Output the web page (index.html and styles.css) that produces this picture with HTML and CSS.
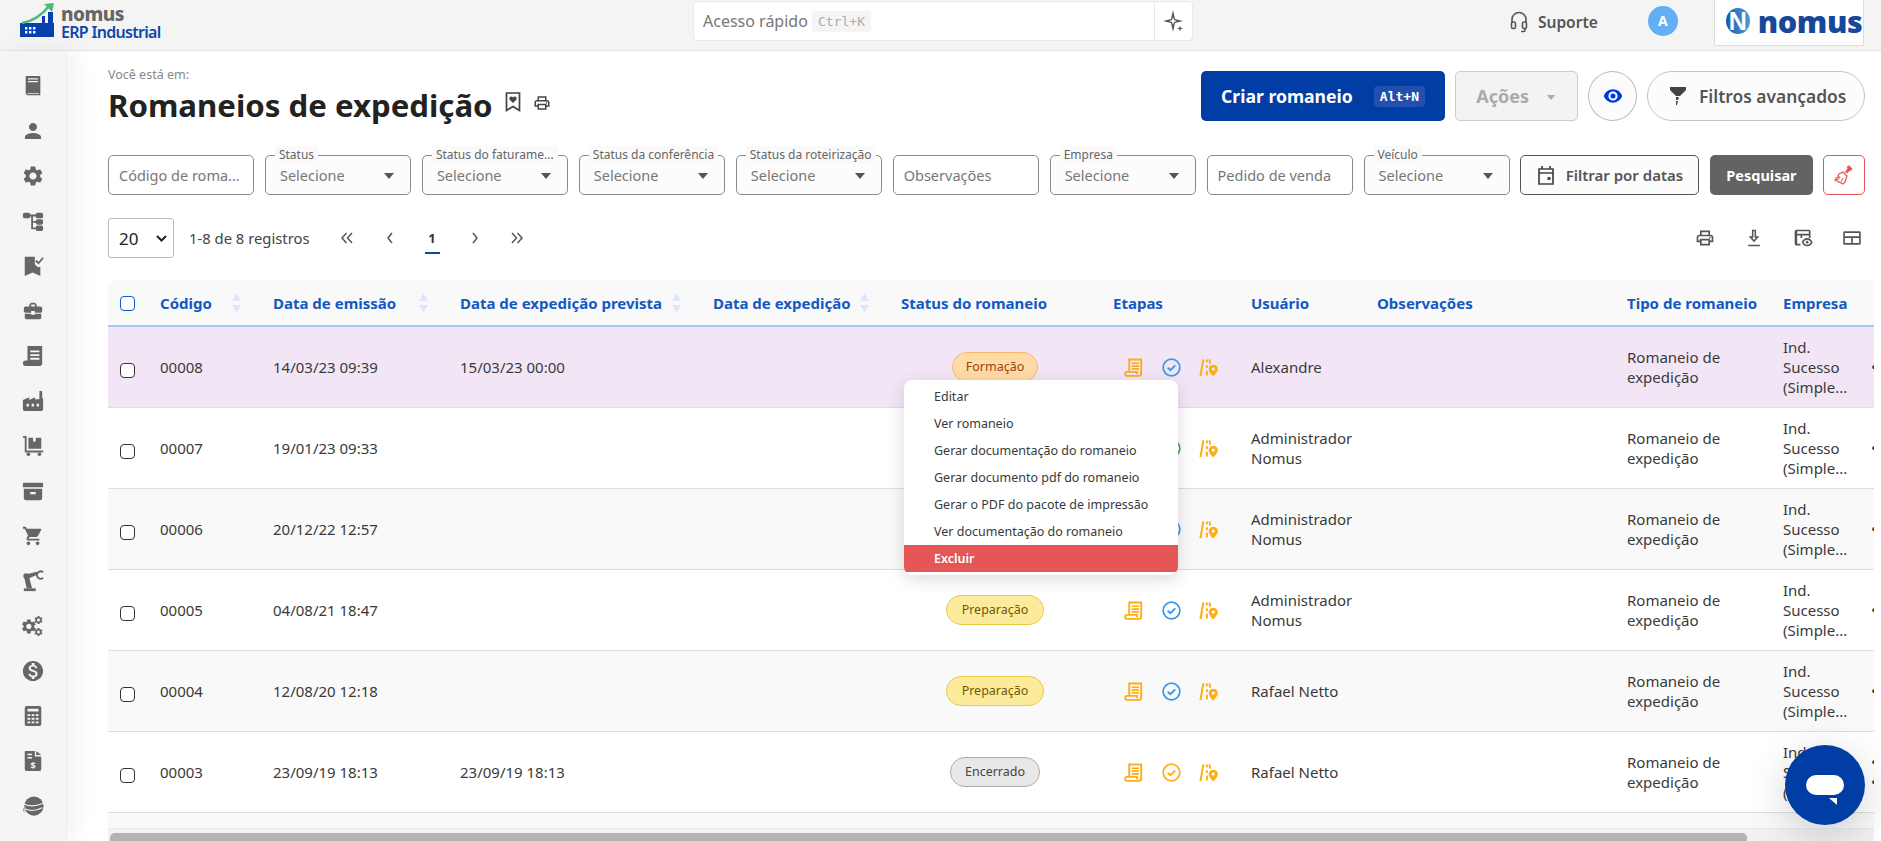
FILE: index.html
```html
<!DOCTYPE html>
<html lang="pt-BR">
<head>
    <meta charset="UTF-8">
    <title>Romaneios de expedição</title>
    <link rel="stylesheet" href="styles.css">
</head>
<body>
    <svg class="sprite" xmlns="http://www.w3.org/2000/svg">
        <symbol id="i-print" viewBox="0 0 24 24"><path d="M19 8h-1V3H6v5H5c-1.66 0-3 1.34-3 3v6h4v4h12v-4h4v-6c0-1.66-1.34-3-3-3zM8 5h8v3H8V5zm8 12v2H8v-4h8v2zm2-2v-2H6v2H4v-4c0-.55.45-1 1-1h14c.55 0 1 .45 1 1v4h-2z"/><circle cx="18" cy="11.5" r="1"/></symbol>
        <symbol id="i-gear" viewBox="0 0 24 24"><path d="M19.14 12.94c.04-.3.06-.61.06-.94 0-.32-.02-.64-.07-.94l2.03-1.58c.18-.14.23-.41.12-.61l-1.92-3.32c-.12-.22-.37-.29-.59-.22l-2.39.96c-.5-.38-1.03-.7-1.62-.94l-.36-2.54c-.04-.24-.24-.41-.48-.41h-3.84c-.24 0-.43.17-.47.41l-.36 2.54c-.59.24-1.13.57-1.62.94l-2.39-.96c-.22-.08-.47 0-.59.22L2.74 8.87c-.12.21-.08.47.12.61l2.03 1.58c-.05.3-.09.63-.09.94s.02.64.07.94l-2.03 1.58c-.18.14-.23.41-.12.61l1.92 3.32c.12.22.37.29.59.22l2.39-.96c.5.38 1.03.7 1.62.94l.36 2.54c.05.24.24.41.48.41h3.84c.24 0 .44-.17.47-.41l.36-2.54c.59-.24 1.13-.56 1.62-.94l2.39.96c.22.08.47 0 .59-.22l1.92-3.32c.12-.22.07-.47-.12-.61l-2.01-1.58zM12 15.6c-1.98 0-3.6-1.62-3.6-3.6s1.62-3.6 3.6-3.6 3.6 1.62 3.6 3.6-1.62 3.6-3.6 3.6z"/></symbol>
        <symbol id="i-receipt" viewBox="0 0 20 20"><path fill="none" stroke="currentColor" stroke-width="2" d="M5.5 14.5V1.600h12.600v15a2.200 2.200 0 0 1-2.200 2.200H3a1.800 1.800 0 0 1-1.800-1.900v-.4a1.800 1.800 0 0 1 1.800-1.900h10.600v2.400"/><path stroke="currentColor" stroke-width="1.700" d="M8 5.500h7.800M8 8.500h7.800M8 11.500h7.800"/></symbol>
        <symbol id="i-check" viewBox="0 0 20 20"><circle cx="10" cy="10" r="8.800" fill="none" stroke="currentColor" stroke-width="1.800"/><path fill="none" stroke="currentColor" stroke-width="2.100" d="M6 10.200l2.900 2.600 5.100-5"/></symbol>
        <symbol id="i-road" viewBox="0 0 20 20"><path fill="none" stroke="currentColor" stroke-width="2.100" d="M1.500 19L4.600 1.500M8.300 1.500v3M8.300 7.500v3M8.300 13.500v5M11 1.500l.8 4.500"/><path fill-rule="evenodd" d="M15 7a4.800 4.800 0 0 0-4.800 4.800c0 3.200 4.800 7.600 4.800 7.600s4.800-4.400 4.800-7.600A4.800 4.800 0 0 0 15 7zm0 6.400a1.700 1.700 0 1 1 0-3.400 1.700 1.700 0 0 1 0 3.400z"/></symbol>
        <symbol id="i-sort" viewBox="0 0 9 20"><path d="M4.500 0L9 8H0zM4.500 20L0 12h9z"/></symbol>
    </svg>

    <header class="topbar">
        <div class="brand">
            <svg class="brand-mark" viewBox="0 0 34 34">
                <path fill="#0a3fae" d="M0 20h34v14H0z"/>
                <path fill="#0a3fae" d="M28 9h5v11h-5zM22 13h3v7h-3z"/>
                <path fill="none" stroke="#4dbb7c" stroke-width="2.600" d="M2 20C14 18 22 12 29 3"/>
                <path fill="#4dbb7c" d="M24 1l10-1-2 9z"/>
                <path fill="#fff" d="M5 24h2.400v2.400H5zM9 24h2.400v2.400H9zM13 24h2.400v2.400H13zM5 28h2.400v2.400H5zM9 28h2.400v2.400H9zM13 28h2.400v2.400H13z"/>
            </svg>
            <div class="brand-text">
                <span class="brand-name">nomus</span>
                <span class="brand-product">ERP Industrial</span>
            </div>
        </div>
        <div class="quick-access">
            <div class="quick-input">Acesso rápido <kbd class="quick-key">Ctrl+K</kbd></div>
            <button class="quick-ai">
                <svg width="20" height="24" viewBox="0 0 20 24"><path fill="#555" d="M9 1l2 9 8 2-8 2-2 9-2-9-8-2 8-2z"/><path fill="#fff" d="M9 8l1 3 3 1-3 1-1 3-1-3-3-1 3-1z"/><path fill="#555" d="M16 16.500l.7 2.300 2.300.7-2.300.7-.7 2.300-.7-2.300-2.300-.7 2.300-.7z"/></svg>
            </button>
        </div>
        <div class="support">
            <svg width="18" height="22" viewBox="0 0 18 22" fill="none" stroke="#555" stroke-width="1.600"><path d="M2 12V8.500a7 7 0 0 1 14 0V12"/><rect x="1.500" y="11" width="4" height="6.500" rx="1.500"/><rect x="12.500" y="11" width="4" height="6.500" rx="1.500"/><path d="M15 17.500v1.500a1.500 1.500 0 0 1-1.500 1.500H11"/></svg>
            <span>Suporte</span>
        </div>
        <div class="avatar">A</div>
        <div class="company-logo">
            <span class="company-mark">N</span>
            <span class="company-name">nomus</span>
        </div>
    </header>

    <div class="layout">
        <nav class="sidebar">
            <a class="nav-item"><svg viewBox="0 0 24 24"><path fill-rule="evenodd" d="M5 1h14a1 1 0 0 1 1 1v20H6a2 2 0 0 1-2-2V2a1 1 0 0 1 1-1zm1.500 2.500V5h11V3.500zm0 3V8h11V6.500zM6 19.500v1h12.500v-1z"/></svg></a>
            <a class="nav-item"><svg viewBox="0 0 24 24"><path d="M12 12c2.210 0 4-1.790 4-4s-1.790-4-4-4-4 1.790-4 4 1.790 4 4 4zm0 2c-2.670 0-8 1.340-8 4v2h16v-2c0-2.660-5.330-4-8-4z" transform="translate(-1.200 -1.200) scale(1.100)"/></svg></a>
            <a class="nav-item"><svg viewBox="0 0 24 24"><use href="#i-gear" x="-1" y="-1" width="26" height="26"/></svg></a>
            <a class="nav-item"><svg viewBox="0 0 24 24"><rect x="1" y="3" width="8" height="6" rx="2"/><rect x="15" y="3" width="8" height="6" rx="2"/><rect x="15" y="10" width="8" height="6" rx="2"/><rect x="15" y="17" width="8" height="6" rx="2"/><path fill="none" stroke="currentColor" stroke-width="2" d="M8 6h8M11 6v14h5M11 13h5"/></svg></a>
            <a class="nav-item"><svg viewBox="0 0 24 24"><path d="M3 2h11v8l3 3h3v10l-8.500-4L3 23z"/><path fill="none" stroke="currentColor" stroke-width="2" d="M15 6l3 3 5-6"/></svg></a>
            <a class="nav-item"><svg viewBox="0 0 24 24"><path d="M10 16v-1H3.010L3 19c0 1.110.89 2 2 2h14c1.110 0 2-.89 2-2v-4h-7v1h-4zm10-9h-4.010V5l-2-2h-4l-2 2v2H4c-1.100 0-2 .9-2 2v3c0 1.110.89 2 2 2h6v-2h4v2h6c1.100 0 2-.9 2-2V9c0-1.100-.9-2-2-2zm-6 0h-4V5h4v2z"/></svg></a>
            <a class="nav-item"><svg viewBox="0 0 24 24"><path fill-rule="evenodd" d="M6 1h16v19a3 3 0 0 1-3 3H4a3 3 0 0 1-3-3 3 3 0 0 1 3-3h2zm3 5v2h10V6zm0 4v2h10v-2zm0 4v2h10v-2z"/></svg></a>
            <a class="nav-item"><svg viewBox="0 0 24 24"><path fill-rule="evenodd" d="M19 1h3v8h1v12a2 2 0 0 1-2 2H3a2 2 0 0 1-2-2V11l7-3v3l6-3v2h5zM5 15v3h2.500v-3zm5.500 0v3H13v-3zm5.500 0v3h2.500v-3z"/></svg></a>
            <a class="nav-item"><svg viewBox="0 0 24 24"><path d="M7 3h5v4h3V3h6v12H7z"/><path fill="none" stroke="currentColor" stroke-width="2" d="M1 2h3v16h19"/><circle cx="7" cy="21" r="2"/><circle cx="19" cy="21" r="2"/></svg></a>
            <a class="nav-item"><svg viewBox="0 0 24 24"><path fill-rule="evenodd" d="M2 3h20a1 1 0 0 1 1 1v4H1V4a1 1 0 0 1 1-1zm0 6.500h20V20a2 2 0 0 1-2 2H4a2 2 0 0 1-2-2zM9 13v2.500h6V13z"/></svg></a>
            <a class="nav-item"><svg viewBox="0 0 24 24"><path d="M7 18c-1.100 0-1.990.9-1.990 2S5.900 22 7 22s2-.9 2-2-.9-2-2-2zM1 2v2h2l3.600 7.590-1.350 2.450c-.16.28-.25.61-.25.96 0 1.100.9 2 2 2h12v-2H7.420c-.14 0-.25-.11-.25-.25l.03-.12.9-1.630h7.450c.75 0 1.410-.41 1.750-1.030l3.580-6.490c.08-.14.12-.31.12-.48 0-.55-.45-1-1-1H5.210l-.94-2H1zm16 16c-1.100 0-1.990.9-1.990 2s.89 2 1.990 2 2-.9 2-2-.9-2-2-2z"/></svg></a>
            <a class="nav-item"><svg viewBox="0 0 24 24"><path d="M2 20h13v3H2z"/><path d="M5 20L2.500 8 4 5l12-3 1 3L8 9l3 11z"/><circle cx="4.500" cy="6.500" r="3"/><path fill="none" stroke="currentColor" stroke-width="2" d="M23 2.500a4 4 0 1 0 0 6"/></svg></a>
            <a class="nav-item"><svg viewBox="0 0 24 24"><use href="#i-gear" x="-2" y="3" width="19" height="19"/><use href="#i-gear" x="12.500" y="0" width="11" height="11"/><use href="#i-gear" x="12.500" y="13" width="11" height="11"/></svg></a>
            <a class="nav-item"><svg viewBox="0 0 24 24"><path d="M12 2C6.480 2 2 6.480 2 12s4.480 10 10 10 10-4.480 10-10S17.520 2 12 2zm1.410 16.090V20h-2.670v-1.930c-1.710-.36-3.160-1.460-3.270-3.400h1.960c.1 1.050.82 1.870 2.650 1.870 1.960 0 2.400-.98 2.400-1.590 0-.83-.44-1.610-2.670-2.140-2.480-.6-4.180-1.620-4.180-3.670 0-1.720 1.390-2.840 3.110-3.210V4h2.670v1.950c1.860.45 2.790 1.860 2.870 3.390H14.300c-.05-1.110-.64-1.870-2.220-1.870-1.500 0-2.400.68-2.400 1.640 0 .84.65 1.390 2.670 1.910s4.180 1.390 4.180 3.910c-.01 1.830-1.380 2.830-3.120 3.160z" transform="translate(-1.200 -1.200) scale(1.100)"/></svg></a>
            <a class="nav-item"><svg viewBox="0 0 24 24"><path fill-rule="evenodd" d="M5 1h14a2 2 0 0 1 2 2v18a2 2 0 0 1-2 2H5a2 2 0 0 1-2-2V3a2 2 0 0 1 2-2zm1 3v3h12V4zm0 6v2h3v-2zm4.500 0v2h3v-2zm4.500 0v2h3v-2zM6 14v2h3v-2zm4.500 0v2h3v-2zm4.500 0v2h3v-2zM6 18v2h3v-2zm4.500 0v2h3v-2zm4.500 0v2h3v-2z"/></svg></a>
            <a class="nav-item"><svg viewBox="0 0 24 24"><path d="M4 1h10v6h7v14a2 2 0 0 1-2 2H5a2 2 0 0 1-2-2V2a1 1 0 0 1 1-1zM15.500 1L21 5.500h-5.500z"/><path fill="none" stroke="#f5f5f5" stroke-width="1.600" d="M6 5h5M6 8.500h5"/><text class="nav-dollar" x="12" y="20.500">$</text></svg></a>
            <a class="nav-item"><svg viewBox="0 0 24 24"><circle cx="13" cy="12" r="10.500"/><path fill="none" stroke="#f5f5f5" stroke-width="1.300" d="M3 10c6 3 13 2 20-1M3 15c6 3 13 2 19-1"/><path fill="none" stroke="#aaa" stroke-width="1.600" d="M4 13c-3 2-3 4-1 5"/></svg></a>
        </nav>

        <main class="main">
            <div class="page-head">
                <div class="page-title">
                    <div class="crumb">Você está em:</div>
                    <h1>Romaneios de expedição
                        <svg class="title-bookmark" viewBox="0 0 16 20"><path fill="none" stroke="#444" stroke-width="1.700" d="M1.500 1h13v17.500L8 14.500l-6.500 4z"/><path fill="#444" d="M8 11L4.500 7.500a2 2 0 0 1 3.500-2 2 2 0 0 1 3.500 2z"/></svg>
                        <svg class="title-print"><use href="#i-print"/></svg>
                    </h1>
                </div>
                <div class="page-actions">
                    <button class="btn-create">Criar romaneio <kbd class="create-key">Alt+N</kbd></button>
                    <button class="btn-actions">Ações <span class="caret-small"></span></button>
                    <button class="btn-eye">
                        <svg width="20" height="20" viewBox="0 0 24 24"><path fill="#0038e0" fill-rule="evenodd" d="M12 4C7 4 2.700 7.300 1 12c1.700 4.700 6 8 11 8s9.300-3.300 11-8c-1.700-4.700-6-8-11-8zm0 13.500a5.500 5.500 0 1 1 0-11 5.500 5.500 0 0 1 0 11zm0-2.500a3 3 0 1 0 0-6 3 3 0 0 0 0 6z"/></svg>
                    </button>
                    <button class="btn-advanced">
                        <svg width="18" height="20" viewBox="0 0 18 20"><path fill="#444" d="M1 1h16v3l-6 6h-4L1 4zM7 11h3l-1 3H7zM7 15h2l-1 4H7z"/></svg>
                        Filtros avançados
                    </button>
                </div>
            </div>

            <div class="filters">
                <div class="field">Código de roma...</div>
                <div class="field field-select"><span class="field-label">Status</span>Selecione</div>
                <div class="field field-select"><span class="field-label">Status do faturame...</span>Selecione</div>
                <div class="field field-select"><span class="field-label">Status da conferência</span>Selecione</div>
                <div class="field field-select"><span class="field-label">Status da roteirização</span>Selecione</div>
                <div class="field">Observações</div>
                <div class="field field-select"><span class="field-label">Empresa</span>Selecione</div>
                <div class="field">Pedido de venda</div>
                <div class="field field-select"><span class="field-label">Veículo</span>Selecione</div>
                <button class="btn-dates">
                    <svg width="18" height="20" viewBox="0 0 18 20"><path fill="none" stroke="#444" stroke-width="1.700" d="M2 4h14v15H2zM2 8h14M5 1v3M13 1v3"/><rect x="10.500" y="12" width="3" height="3" fill="#444"/></svg>
                    Filtrar por datas
                </button>
                <button class="btn-search">Pesquisar</button>
                <button class="btn-clear">
                    <svg width="20" height="20" viewBox="0 0 20 20"><path fill="#e55757" d="M13 1.500l2-1.200 3.500 3.500-1.500 2-1.500.2-2.500 2.500-2-2 2.300-2.500z"/><path fill="none" stroke="#e55757" stroke-width="1.300" d="M9 7l4 4-2 6-2 2-8-4 2-1-1-1 3-1-1-1 1-2z"/><path stroke="#e55757" d="M4 15l2-3M7 17l2-4"/></svg>
                </button>
            </div>

            <div class="pager-row">
                <div class="page-size">20<svg width="11" height="7" viewBox="0 0 11 7"><path fill="none" stroke="#222" stroke-width="2" d="M1 1l4.500 4.500L10 1"/></svg></div>
                <span class="record-count">1-8 de 8 registros</span>
                <div class="pager">
                    <svg viewBox="0 0 14 12"><path d="M6.500 1L2 6l4.500 5M12 1L7.500 6l4.500 5"/></svg>
                    <svg viewBox="0 0 14 12"><path d="M9 1L5 6l4 5"/></svg>
                    <span class="page-current">1</span>
                    <svg viewBox="0 0 14 12"><path d="M5 1l4 5-4 5"/></svg>
                    <svg viewBox="0 0 14 12"><path d="M2 1l4.500 5L2 11M7.500 1L12 6l-4.500 5"/></svg>
                </div>
                <div class="table-tools">
                    <svg viewBox="0 0 24 24"><use href="#i-print"/></svg>
                    <svg viewBox="0 0 24 24"><path d="M9.500 2h5v8h4L12 17l-6.500-7h4zm1.800 1.800v8H9.700l2.300 2.500 2.300-2.500h-1.600v-8zM5 20h14v2H5z"/></svg>
                    <svg viewBox="0 0 24 24"><path d="M4 2h15a2 2 0 0 1 2 2v8h-2V9H11v3H9V9H5v10h4v2H4a2 2 0 0 1-2-2V4a2 2 0 0 1 2-2zm1 2v3h14V4z"/><path fill-rule="evenodd" d="M17 12c-3 0-5.500 2-6.500 5 1 3 3.500 5 6.500 5s5.500-2 6.500-5c-1-3-3.500-5-6.500-5zm0 8c-2 0-3.600-1.200-4.400-3 .8-1.800 2.400-3 4.400-3s3.600 1.200 4.400 3c-.8 1.800-2.400 3-4.400 3z"/><circle cx="17" cy="17" r="1.600"/></svg>
                    <svg viewBox="0 0 24 24"><path d="M3 4h18a1.500 1.500 0 0 1 1.500 1.500v13A1.500 1.500 0 0 1 21 20H3a1.500 1.500 0 0 1-1.500-1.500v-13A1.500 1.500 0 0 1 3 4zm.500 2v4h17V6zm0 6v6h7.500v-6zm9.500 0v6h7.500v-6z"/></svg>
                </div>
            </div>

            <div class="table-wrap">
                <table class="grid">
                    <colgroup>
                        <col class="c-check"><col class="c-code"><col class="c-issued"><col class="c-planned"><col class="c-shipped"><col class="c-status"><col class="c-steps"><col class="c-user"><col class="c-notes"><col class="c-type"><col class="c-company"><col class="c-more">
                    </colgroup>
                    <thead>
                        <tr>
                            <th><input type="checkbox" class="check check-head"></th>
                            <th><div class="th-sort">Código<svg class="sort"><use href="#i-sort"/></svg></div></th>
                            <th><div class="th-sort">Data de emissão<svg class="sort"><use href="#i-sort"/></svg></div></th>
                            <th><div class="th-sort">Data de expedição prevista<svg class="sort"><use href="#i-sort"/></svg></div></th>
                            <th><div class="th-sort">Data de expedição<svg class="sort"><use href="#i-sort"/></svg></div></th>
                            <th>Status do romaneio</th>
                            <th>Etapas</th>
                            <th>Usuário</th>
                            <th>Observações</th>
                            <th>Tipo de romaneio</th>
                            <th>Empresa</th>
                            <th></th>
                        </tr>
                    </thead>
                    <tbody>
                        <tr class="row-selected">
                            <td><input type="checkbox" class="check"></td>
                            <td>00008</td><td>14/03/23 09:39</td><td>15/03/23 00:00</td><td></td>
                            <td class="cell-status"><span class="badge badge-forming">Formação</span></td>
                            <td><div class="steps"><svg class="step-amber"><use href="#i-receipt"/></svg><svg class="step-blue"><use href="#i-check"/></svg><svg class="step-amber"><use href="#i-road"/></svg></div></td>
                            <td>Alexandre</td><td></td><td>Romaneio de expedição</td><td>Ind. Sucesso (Simple...</td><td>•</td>
                        </tr>
                        <tr>
                            <td><input type="checkbox" class="check"></td>
                            <td>00007</td><td>19/01/23 09:33</td><td></td><td></td>
                            <td class="cell-status"><span class="badge badge-prep">Preparação</span></td>
                            <td><div class="steps"><svg class="step-amber"><use href="#i-receipt"/></svg><svg class="step-green"><use href="#i-check"/></svg><svg class="step-amber"><use href="#i-road"/></svg></div></td>
                            <td>Administrador Nomus</td><td></td><td>Romaneio de expedição</td><td>Ind. Sucesso (Simple...</td><td>•</td>
                        </tr>
                        <tr>
                            <td><input type="checkbox" class="check"></td>
                            <td>00006</td><td>20/12/22 12:57</td><td></td><td></td>
                            <td class="cell-status"><span class="badge badge-prep">Preparação</span></td>
                            <td><div class="steps"><svg class="step-amber"><use href="#i-receipt"/></svg><svg class="step-blue"><use href="#i-check"/></svg><svg class="step-amber"><use href="#i-road"/></svg></div></td>
                            <td>Administrador Nomus</td><td></td><td>Romaneio de expedição</td><td>Ind. Sucesso (Simple...</td><td>•</td>
                        </tr>
                        <tr>
                            <td><input type="checkbox" class="check"></td>
                            <td>00005</td><td>04/08/21 18:47</td><td></td><td></td>
                            <td class="cell-status"><span class="badge badge-prep">Preparação</span></td>
                            <td><div class="steps"><svg class="step-amber"><use href="#i-receipt"/></svg><svg class="step-blue"><use href="#i-check"/></svg><svg class="step-amber"><use href="#i-road"/></svg></div></td>
                            <td>Administrador Nomus</td><td></td><td>Romaneio de expedição</td><td>Ind. Sucesso (Simple...</td><td>•</td>
                        </tr>
                        <tr>
                            <td><input type="checkbox" class="check"></td>
                            <td>00004</td><td>12/08/20 12:18</td><td></td><td></td>
                            <td class="cell-status"><span class="badge badge-prep">Preparação</span></td>
                            <td><div class="steps"><svg class="step-amber"><use href="#i-receipt"/></svg><svg class="step-blue"><use href="#i-check"/></svg><svg class="step-amber"><use href="#i-road"/></svg></div></td>
                            <td>Rafael Netto</td><td></td><td>Romaneio de expedição</td><td>Ind. Sucesso (Simple...</td><td>•</td>
                        </tr>
                        <tr>
                            <td><input type="checkbox" class="check"></td>
                            <td>00003</td><td>23/09/19 18:13</td><td>23/09/19 18:13</td><td></td>
                            <td class="cell-status"><span class="badge badge-closed">Encerrado</span></td>
                            <td><div class="steps"><svg class="step-amber"><use href="#i-receipt"/></svg><svg class="step-amber"><use href="#i-check"/></svg><svg class="step-amber"><use href="#i-road"/></svg></div></td>
                            <td>Rafael Netto</td><td></td><td>Romaneio de expedição</td><td>Ind. Sucesso (Simple...</td><td>•<br>•</td>
                        </tr>
                        <tr>
                            <td><input type="checkbox" class="check"></td>
                            <td>00002</td><td></td><td></td><td></td><td></td><td></td>
                            <td></td><td></td><td>Romaneio de expedição</td><td>Ind. Sucesso (Simple...</td><td>•</td>
                        </tr>
                    </tbody>
                </table>

                <ul class="row-menu">
                    <li>Editar</li>
                    <li>Ver romaneio</li>
                    <li>Gerar documentação do romaneio</li>
                    <li>Gerar documento pdf do romaneio</li>
                    <li>Gerar o PDF do pacote de impressão</li>
                    <li>Ver documentação do romaneio</li>
                    <li class="row-menu-danger">Excluir</li>
                </ul>
            </div>
            <div class="h-scroll"><div class="h-scroll-thumb"></div></div>
        </main>
    </div>

    <button class="chat-fab">
        <svg width="38" height="31" viewBox="0 0 38 31"><rect width="38" height="20" rx="10" fill="#fff"/><path fill="#fff" d="M23 23h8v7z"/></svg>
    </button>
</body>
</html>
```

FILE: styles.css
```css
* {
    box-sizing: border-box;
}
body {
    margin: 0;
    height: 841px;
    overflow: hidden;
    background-color: #fff;
    color: #3a3a3a;
    font-family: "Noto Sans", "Open Sans", sans-serif;
    font-size: 15px;
}
button {
    font-family: inherit;
    cursor: pointer;
}
kbd {
    font-family: "DejaVu Sans Mono", "Liberation Mono", monospace;
}
.sprite {
    position: absolute;
    width: 0;
    height: 0;
}

/* top bar */
.topbar {
    display: flex;
    align-items: flex-start;
    height: 51px;
    background-color: #f4f4f4;
    border-bottom: 1px solid #e6e6e6;
}
.brand {
    display: flex;
    gap: 7px;
    width: 693px;
    padding: 3px 0 0 20px;
}
.brand-mark {
    width: 34px;
    height: 34px;
    flex: none;
}
.brand-text {
    display: flex;
    flex-direction: column;
    margin-top: 2px;
}
.brand-name {
    color: #666;
    font-size: 19px;
    font-weight: 800;
    line-height: 19px;
    letter-spacing: -0.5px;
}
.brand-product {
    color: #0f47a8;
    font-size: 16px;
    font-weight: 600;
    line-height: 17px;
    letter-spacing: -0.7px;
}
.quick-access {
    display: flex;
    width: 500px;
    height: 40px;
    margin-top: 1px;
    background-color: #fff;
    border: 1px solid #e8e8e8;
    border-radius: 4px;
}
.quick-input {
    flex: 1;
    display: flex;
    align-items: center;
    padding-left: 9px;
    color: #777;
    font-size: 16px;
    white-space: pre;
}
.quick-key {
    padding: 3px 6px;
    background-color: #f5f5f5;
    border-radius: 3px;
    color: #aaa;
    font-size: 13px;
}
.quick-ai {
    width: 38px;
    padding: 0;
    display: flex;
    align-items: center;
    justify-content: center;
    background: none;
    border: none;
    border-left: 1px solid #e8e8e8;
}
.support {
    display: flex;
    align-items: center;
    gap: 10px;
    margin: 11px 0 0 317px;
    color: #555;
    font-size: 15.500px;
    font-weight: 600;
}
.avatar {
    width: 30px;
    height: 30px;
    margin: 6px 0 0 50px;
    background-color: #64aef5;
    border-radius: 50%;
    color: #fff;
    font-size: 14px;
    font-weight: 700;
    line-height: 30px;
    text-align: center;
}
.company-logo {
    display: flex;
    align-items: center;
    gap: 8px;
    width: 150px;
    height: 46px;
    margin-left: 36px;
    padding: 0 0 4px 11px;
    background-color: #fff;
    border: 1px solid #ddd;
    border-top: none;
}
.company-mark {
    width: 24px;
    height: 26px;
    background: linear-gradient(90deg, #1c5aa8, #4f9bd8);
    border-radius: 50%;
    color: #fff;
    font-family: "Liberation Sans", sans-serif;
    font-size: 25px;
    font-weight: 700;
    line-height: 26px;
    text-align: center;
}
.company-name {
    color: #17479a;
    font-family: "Open Sans", sans-serif;
    font-size: 30.500px;
    font-weight: 800;
    line-height: 30px;
    letter-spacing: -0.4px;
}

/* side navigation */
.layout {
    display: flex;
    height: 790px;
}
.sidebar {
    flex: none;
    width: 67px;
    padding-top: 12px;
    background-color: #f5f5f5;
    border-right: 1px solid #eee;
    box-shadow: 8px 0 24px rgba(0,0,0,0.06);
    z-index: 1;
}
.nav-item {
    display: flex;
    align-items: center;
    justify-content: center;
    height: 45px;
    color: #666;
}
.nav-item svg {
    width: 22px;
    height: 22px;
    fill: currentColor;
}
.nav-dollar {
    fill: #f5f5f5;
    font-size: 10px;
    font-weight: 700;
    text-anchor: middle;
}

/* page content */
.main {
    flex: 1;
    min-width: 0;
    padding: 15px 16px 0 41px;
}
.page-head {
    display: flex;
    justify-content: space-between;
    margin-bottom: 29px;
}
.crumb {
    height: 18px;
    color: #888;
    font-size: 12.500px;
    line-height: 18px;
}
h1 {
    display: flex;
    align-items: flex-start;
    margin: 0;
    color: #222;
    font-size: 31.200px;
    font-weight: 700;
    line-height: 42px;
    white-space: nowrap;
}
.title-bookmark {
    width: 16px;
    height: 20px;
    margin: 8px 0 0 12px;
}
.title-print {
    width: 18px;
    height: 18px;
    margin: 10px 0 0 12px;
    fill: #444;
}
.page-actions {
    display: flex;
    gap: 10px;
    height: 50px;
    margin-top: 5px;
}
.btn-create {
    display: flex;
    align-items: center;
    justify-content: space-between;
    width: 244px;
    padding: 0 20px;
    background-color: #003da5;
    border: none;
    border-radius: 5px;
    color: #fff;
    font-size: 17.600px;
    font-weight: 700;
}
.create-key {
    padding: 3px 6px;
    background-color: #2350ae;
    border-radius: 4px;
    font-size: 13px;
    font-weight: 700;
}
.btn-actions {
    width: 123px;
    padding-left: 4px;
    background-color: #f3f3f3;
    border: 1px solid #ccc;
    border-radius: 5px;
    color: #aaa;
    font-size: 18px;
    font-weight: 700;
}
.caret-small {
    display: inline-block;
    margin: 0 0 3px 13px;
    border-top: 5px solid #aaa;
    border-left: 4px solid transparent;
    border-right: 4px solid transparent;
}
.btn-eye {
    display: flex;
    align-items: center;
    justify-content: center;
    width: 49px;
    padding: 0;
    background-color: #fcfcfc;
    border: 1px solid #bbb;
    border-radius: 50%;
}
.btn-advanced {
    display: flex;
    align-items: center;
    gap: 12px;
    width: 218px;
    padding: 0 0 0 21px;
    background-color: #fcfcfc;
    border: 1px solid #c4c4c4;
    border-radius: 25px;
    color: #555;
    font-size: 17.400px;
    font-weight: 600;
}

/* filter row */
.filters {
    display: flex;
    gap: 10.500px;
    height: 40px;
}
.field {
    position: relative;
    flex: 1 1 146px;
    min-width: 0;
    padding: 0 0 0 10px;
    border: 1px solid #8a8a8a;
    border-radius: 5px;
    color: #777;
    font-size: 14.500px;
    line-height: 38px;
    white-space: nowrap;
}
.field-select {
    padding-left: 14px;
    background-color: #fcfcfc;
}
.field-select::after {
    content: "";
    position: absolute;
    top: 17px;
    right: 16px;
    border-top: 6px solid #555;
    border-left: 5px solid transparent;
    border-right: 5px solid transparent;
}
.field-label {
    position: absolute;
    top: -10px;
    left: 9px;
    padding: 0 4px;
    background-color: #fafafa;
    color: #666;
    font-size: 12px;
    line-height: 17px;
}
.btn-dates {
    flex: none;
    display: flex;
    align-items: center;
    justify-content: center;
    gap: 11px;
    width: 179px;
    padding: 0;
    background-color: #fcfcfc;
    border: 1px solid #555;
    border-radius: 5px;
    color: #555;
    font-size: 15px;
    font-weight: 600;
}
.btn-search {
    flex: none;
    width: 103px;
    padding: 0;
    background-color: #636363;
    border: none;
    border-radius: 5px;
    color: #fff;
    font-size: 14.500px;
    font-weight: 700;
}
.btn-clear {
    flex: none;
    display: flex;
    align-items: center;
    justify-content: center;
    width: 41.500px;
    padding: 0;
    background-color: #fff;
    border: 1px solid #e55757;
    border-radius: 5px;
}

/* pagination row */
.pager-row {
    display: flex;
    align-items: center;
    height: 40px;
    margin-top: 23px;
}
.page-size {
    display: flex;
    align-items: center;
    justify-content: space-between;
    width: 66px;
    height: 40px;
    padding: 0 6px 0 10px;
    border: 1px solid #bbb;
    border-radius: 3px;
    color: #222;
    font-size: 17px;
}
.record-count {
    margin-left: 15px;
    width: 151px;
    color: #444;
    font-size: 14.800px;
}
.pager {
    display: flex;
    align-items: center;
    gap: 28.500px;
}
.pager svg {
    width: 14px;
    height: 12px;
    fill: none;
    stroke: #555;
    stroke-width: 1.500;
}
.page-current {
    position: relative;
    width: 14px;
    color: #333;
    font-size: 13px;
    font-weight: 700;
    text-align: center;
}
.page-current::after {
    content: "";
    position: absolute;
    left: 0;
    right: -1px;
    bottom: -7px;
    height: 2px;
    background-color: #0f47a8;
}
.table-tools {
    display: flex;
    gap: 29px;
    margin-left: auto;
    padding-right: 3px;
}
.table-tools svg {
    width: 20px;
    height: 20px;
    fill: #555;
}

/* data table */
.table-wrap {
    position: relative;
    height: 548px;
    margin-top: 22px;
    margin-right: -9px;
    overflow: hidden;
    border-top-left-radius: 8px;
}
.grid {
    width: 1871px;
    table-layout: fixed;
    border-collapse: separate;
    border-spacing: 0;
}
.c-check { width: 40px; }
.c-code { width: 113px; }
.c-issued { width: 187px; }
.c-planned { width: 253px; }
.c-shipped { width: 188px; }
.c-status { width: 212px; }
.c-steps { width: 138px; }
.c-user { width: 126px; }
.c-notes { width: 250px; }
.c-type { width: 156px; }
.c-company { width: 88px; }
.c-more { width: 120px; }
.grid th {
    height: 47px;
    padding: 0 12px;
    background-color: #f9f9f9;
    border-bottom: 2px solid #9ccbfa;
    color: #1259c3;
    font-size: 15px;
    font-weight: 700;
    text-align: left;
    white-space: nowrap;
}
.th-sort {
    display: flex;
    align-items: center;
    justify-content: space-between;
    padding-right: 8px;
}
.sort {
    width: 9px;
    height: 20px;
    flex: none;
    fill: #dbe7f8;
}
.grid td {
    height: 81px;
    padding: 0 2px 0 12px;
    border-bottom: 1px solid #ddd;
    font-size: 15px;
    line-height: 20px;
}
.grid tbody tr:nth-child(odd) td {
    background-color: #f9f9f9;
}
.grid tbody tr.row-selected td {
    background-color: #f2e6f6;
}
.check {
    appearance: none;
    display: block;
    width: 15px;
    height: 15px;
    margin: 7px 0 0;
    background-color: #fff;
    border: 1.500px solid #333;
    border-radius: 4px;
}
.check-head {
    margin-top: 1px;
    border-color: #1259c3;
}
.grid td.cell-status {
    padding: 0;
    text-align: center;
}
.badge {
    display: inline-block;
    height: 30px;
    border: 1px solid;
    border-radius: 15px;
    font-size: 12.500px;
    line-height: 28px;
    text-align: center;
}
.badge-forming {
    width: 86px;
    background-color: #ffdba8;
    border-color: #fbb868;
    color: #9c4212;
}
.badge-prep {
    width: 98px;
    background-color: #fdeb9d;
    border-color: #e8c94a;
    color: #6e5a00;
}
.badge-closed {
    width: 90px;
    background-color: #e8e8e8;
    border-color: #aaa;
    color: #444;
}
.steps {
    display: flex;
    gap: 18.500px;
    margin-left: 11px;
}
.steps svg {
    width: 19px;
    height: 19px;
    flex: none;
    fill: currentColor;
}
.step-amber { color: #ffad14; }
.step-blue { color: #3d97e8; }
.step-green { color: #4caf50; }

/* row actions */
.row-menu {
    position: absolute;
    top: 100px;
    left: 796px;
    width: 274px;
    margin: 0;
    padding: 3px 0;
    list-style: none;
    background-color: #fff;
    border-radius: 8px;
    box-shadow: 0 4px 16px rgba(60,40,80,0.18);
    overflow: hidden;
    font-size: 12.500px;
}
.row-menu li {
    height: 27px;
    padding-left: 30px;
    color: #3a3a3a;
    line-height: 27px;
}
.row-menu li.row-menu-danger {
    background-color: #e55757;
    color: #fff;
    font-weight: 600;
}
.h-scroll {
    height: 13px;
    margin-right: -9px;
    padding-top: 4px;
    background-color: #f1f1f1;
    border-top: 1px solid #e3ecf5;
}
.h-scroll-thumb {
    width: 1637px;
    height: 9px;
    margin-left: 2px;
    background-color: #b3b3b3;
    border-radius: 5px 5px 0 0;
}
.chat-fab {
    position: fixed;
    right: 16px;
    bottom: 16px;
    display: flex;
    align-items: center;
    justify-content: center;
    width: 80px;
    height: 80px;
    padding: 11px 0 0;
    background-color: #003da5;
    border: none;
    border-radius: 50%;
    box-shadow: 0 10px 40px rgba(0,0,0,0.18);
}
```
